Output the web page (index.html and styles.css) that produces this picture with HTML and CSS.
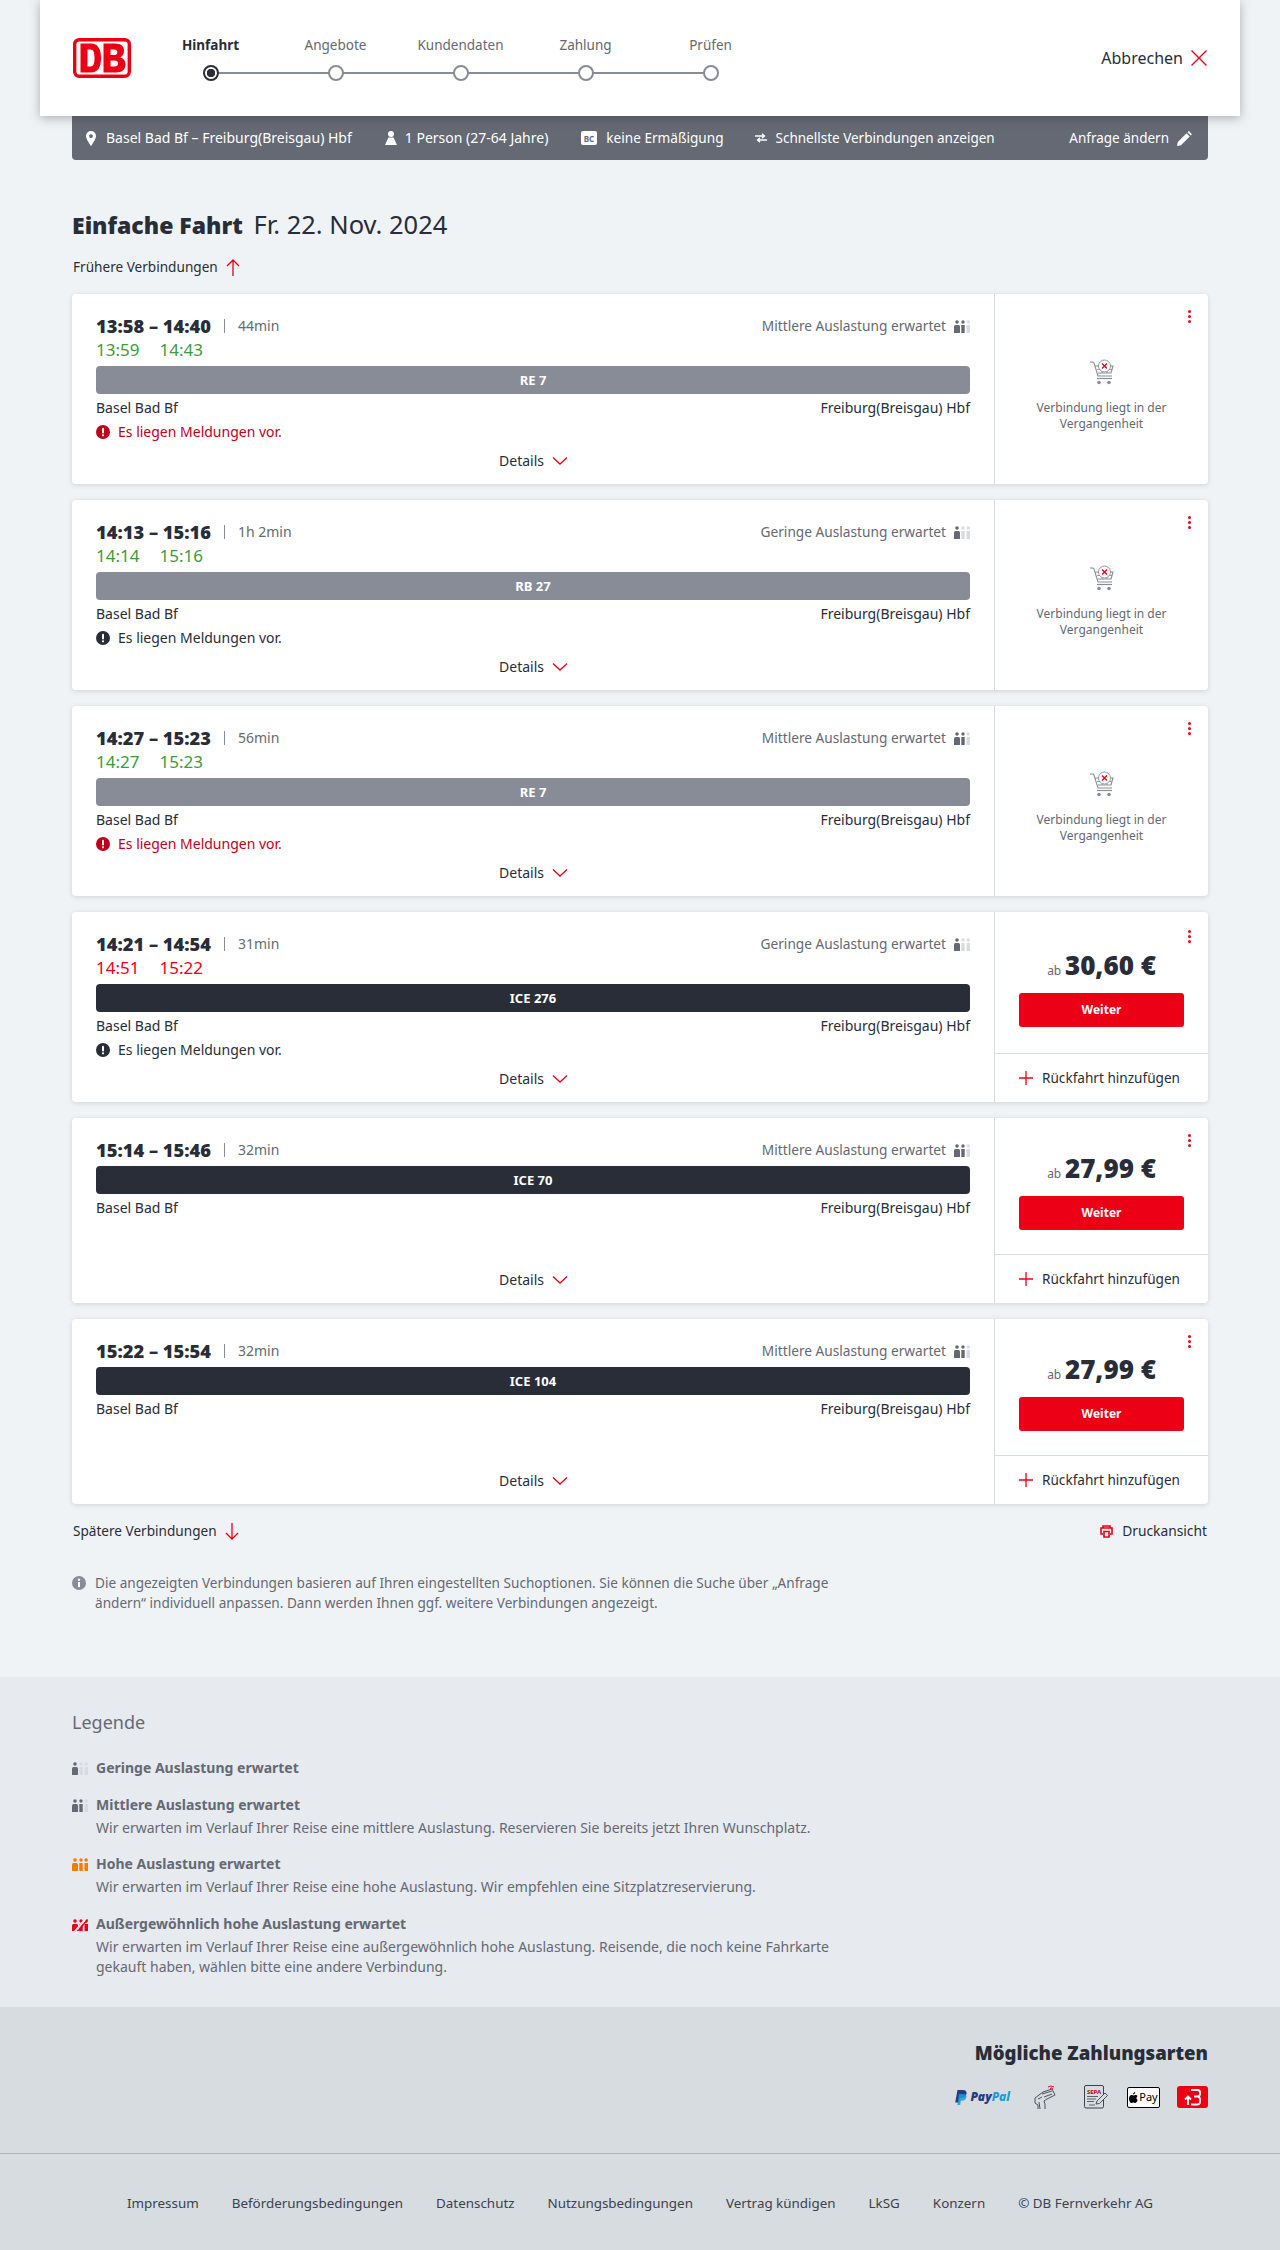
FILE: index.html
```html
<!DOCTYPE html>
<html lang="de">
<head>
  <meta charset="UTF-8" />
  <meta name="viewport" content="width=1280, initial-scale=1.0" />
  <title>Fahrplan - Basel Bad Bf nach Freiburg(Breisgau) Hbf</title>
  <link rel="stylesheet" href="styles.css">
</head>
<body>
  <!-- Icons, used below through <use> -->
  <svg class="sprite" aria-hidden="true">
    <symbol id="occ-1" viewBox="0 0 16 13">
      <circle cx="3" cy="2" r="1.8" fill="#646973"/><path d="M0 6.5Q0 5 1.5 5h3Q6 5 6 6.5V13H0z" fill="#646973"/>
      <circle cx="9" cy="2" r="1.7" fill="#d7dce1"/><rect x="7.3" y="5" width="3.4" height="8" fill="#d7dce1"/>
      <circle cx="14.2" cy="2" r="1.7" fill="#d7dce1"/><rect x="12.5" y="5" width="3.5" height="8" fill="#d7dce1"/>
    </symbol>
    <symbol id="occ-2" viewBox="0 0 16 13">
      <circle cx="3" cy="2" r="1.8" fill="#646973"/><path d="M0 6.5Q0 5 1.5 5h3Q6 5 6 6.5V13H0z" fill="#646973"/>
      <circle cx="9" cy="2" r="1.7" fill="#646973"/><rect x="7.3" y="5" width="3.4" height="8" fill="#646973"/>
      <circle cx="14.2" cy="2" r="1.7" fill="#d7dce1"/><rect x="12.5" y="5" width="3.5" height="8" fill="#d7dce1"/>
    </symbol>
    <symbol id="occ-3" viewBox="0 0 16 13">
      <circle cx="3" cy="2" r="1.8" fill="#f57c00"/><path d="M0 6.5Q0 5 1.5 5h3Q6 5 6 6.5V13H0z" fill="#f57c00"/>
      <circle cx="9" cy="2" r="1.7" fill="#f57c00"/><rect x="7.3" y="5" width="3.4" height="8" fill="#f57c00"/>
      <circle cx="14.2" cy="2" r="1.7" fill="#f57c00"/><rect x="12.5" y="5" width="3.5" height="8" fill="#f57c00"/>
    </symbol>
    <symbol id="occ-4" viewBox="0 0 16 13">
      <circle cx="3" cy="3" r="1.8" fill="#ec0016"/><path d="M0 7.5Q0 6 1.5 6h3Q6 6 6 7.5V13H0z" fill="#ec0016"/>
      <circle cx="9" cy="3" r="1.7" fill="#ec0016"/><rect x="7.3" y="6" width="3.4" height="7" fill="#ec0016"/>
      <circle cx="14.2" cy="3" r="1.7" fill="#ec0016"/><rect x="12.5" y="6" width="3.5" height="7" fill="#ec0016"/>
      <path d="M3 13.5 14.5 0" stroke="#e7eaef" stroke-width="2"/><path d="M6 13 15.5 1.5" stroke="#ec0016" stroke-width="1.4"/>
    </symbol>
    <symbol id="chev" viewBox="0 0 16 10"><path d="M1 1.5 8 8l7-6.5" fill="none" stroke="#ec0016" stroke-width="1.3"/></symbol>
    <symbol id="alert" viewBox="0 0 14 14"><circle cx="7" cy="7" r="7" fill="currentColor"/><rect x="6" y="2.8" width="2" height="5.6" rx="1" fill="#fff"/><circle cx="7" cy="10.3" r="1.1" fill="#fff"/></symbol>
    <symbol id="plus" viewBox="0 0 14 14"><path d="M7 0v14M0 7h14" stroke="#ec0016" stroke-width="1.3" fill="none"/></symbol>
    <symbol id="cart" viewBox="0 0 26 26">
      <path d="M1 3h3l1 1 4 13h14M6.5 7H24l-2 7H9" fill="none" stroke="#878c96" stroke-width="1.1"/>
      <path d="M8 10.5h15M13 7v7M18 7v7" fill="none" stroke="#878c96" stroke-width=".8"/>
      <path d="M8 19.5h15" stroke="#878c96" stroke-width="1.2"/>
      <circle cx="10" cy="23.5" r="1.8" fill="#878c96"/><circle cx="20" cy="23.5" r="1.8" fill="#878c96"/>
      <circle cx="15.5" cy="7" r="6" fill="#fff" stroke="#878c96" stroke-width=".9"/>
      <path d="M13 4.5l5 5M18 4.5l-5 5" stroke="#ec0016" stroke-width="1.4"/>
    </symbol>
  </svg>

  <header class="topbar">
    <svg class="logo" viewBox="0 0 58 40" aria-label="DB">
      <rect x="1.7" y="1.7" width="54.6" height="36.6" rx="4.5" fill="#fff" stroke="#ec0016" stroke-width="3.4"/>
      <path d="M7.5 5.5H18C25 5.5 28 11 28 20s-3 14.5-10 14.5H7.5zM14.5 11.5v17h3c3 0 4-3 4-8.500s-1-8.500-4-8.500zM30.5 5.5H42c6 0 9 2.700 9 7.500 0 3-1.400 5.300-4 6.300 3.500.9 5.500 3.300 5.500 7 0 5.200-3.300 8.200-9.500 8.200H30.500zM37.500 11.500V17H41c2.200 0 3.300-.9 3.300-2.800s-1.100-2.700-3.300-2.700zM37.500 22.500v6h4c2.300 0 3.500-1 3.500-3s-1.200-3-3.500-3z" fill="#ec0016" fill-rule="evenodd"/>
    </svg>
    <ol class="steps">
      <li class="step step-active"><span class="step-label">Hinfahrt</span><span class="step-dot"></span></li>
      <li class="step"><span class="step-label">Angebote</span><span class="step-dot"></span></li>
      <li class="step"><span class="step-label">Kundendaten</span><span class="step-dot"></span></li>
      <li class="step"><span class="step-label">Zahlung</span><span class="step-dot"></span></li>
      <li class="step"><span class="step-label">Prüfen</span><span class="step-dot"></span></li>
    </ol>
    <a class="cancel">Abbrechen
      <svg width="16" height="16" viewBox="0 0 16 16"><path d="M.5.5l15 15M15.5.5l-15 15" stroke="#ec0016" stroke-width="1.4" fill="none"/></svg>
    </a>
  </header>

  <main class="content">
    <div class="query">
      <span class="query-item query-route">
        <svg width="10" height="15" viewBox="0 0 10 15"><path fill-rule="evenodd" fill="#fff" d="M5 0a5 5 0 0 1 5 5c0 3.500-5 10-5 10S0 8.500 0 5a5 5 0 0 1 5-5zm0 3.200a1.900 1.900 0 1 0 0 3.800 1.900 1.900 0 0 0 0-3.800z"/></svg>
        Basel Bad Bf – Freiburg(Breisgau) Hbf
      </span>
      <span class="query-item query-person">
        <svg width="12" height="14" viewBox="0 0 12 14"><circle cx="6" cy="3" r="3" fill="#fff"/><path d="M3.500 6.500h5L12 14H0z" fill="#fff"/></svg>
        1 Person (27-64 Jahre)
      </span>
      <span class="query-item query-bc">
        <svg width="16" height="14" viewBox="0 0 16 14"><rect width="16" height="14" rx="2" fill="#fff"/><text x="8" y="10.5" text-anchor="middle" class="bc-text">BC</text></svg>
        keine Ermäßigung
      </span>
      <span class="query-item query-fast">
        <svg width="12" height="10" viewBox="0 0 12 10"><path d="M0 3h9M7 .8 9.500 3 7 5.200M12 7H3M5 4.800 2.500 7 5 9.200" stroke="#fff" stroke-width="1.3" fill="none"/></svg>
        Schnellste Verbindungen anzeigen
      </span>
      <a class="query-item query-edit">Anfrage ändern
        <svg width="15" height="15" viewBox="0 0 15 15"><path d="M0 15l.8-4L9.500 2.300l3.200 3.200L4 14.200zM10.500 1.300 11.800 0 15 3.200l-1.300 1.300z" fill="#fff"/></svg>
      </a>
    </div>

    <h1 class="page-title"><strong>Einfache Fahrt</strong> <span>Fr. 22. Nov. 2024</span></h1>

    <a class="more-link more-earlier">Frühere Verbindungen
      <svg width="14" height="17" viewBox="0 0 14 17"><path d="M7 17V1M1 7l6-6 6 6" stroke="#ec0016" stroke-width="1.3" fill="none"/></svg>
    </a>

    <article class="card">
      <div class="trip">
        <div class="trip-head">
          <span class="times">13:58 – 14:40</span><span class="sep"></span><span class="duration">44min</span>
          <span class="load">Mittlere Auslastung erwartet <svg class="occ"><use href="#occ-2"/></svg></span>
        </div>
        <div class="realtime on-time"><span>13:59</span><span>14:43</span></div>
        <div class="train train-regio">RE 7</div>
        <div class="stations"><span>Basel Bad Bf</span><span>Freiburg(Breisgau) Hbf</span></div>
        <div class="notice notice-alert"><svg class="notice-icon"><use href="#alert"/></svg>Es liegen Meldungen vor.</div>
        <a class="details">Details <svg class="chev"><use href="#chev"/></svg></a>
      </div>
      <div class="side">
        <span class="kebab"><i></i><i></i><i></i></span>
        <div class="past"><svg class="cart"><use href="#cart"/></svg><p>Verbindung liegt in der Vergangenheit</p></div>
      </div>
    </article>

    <article class="card">
      <div class="trip">
        <div class="trip-head">
          <span class="times">14:13 – 15:16</span><span class="sep"></span><span class="duration">1h 2min</span>
          <span class="load">Geringe Auslastung erwartet <svg class="occ"><use href="#occ-1"/></svg></span>
        </div>
        <div class="realtime on-time"><span>14:14</span><span>15:16</span></div>
        <div class="train train-regio">RB 27</div>
        <div class="stations"><span>Basel Bad Bf</span><span>Freiburg(Breisgau) Hbf</span></div>
        <div class="notice"><svg class="notice-icon"><use href="#alert"/></svg>Es liegen Meldungen vor.</div>
        <a class="details">Details <svg class="chev"><use href="#chev"/></svg></a>
      </div>
      <div class="side">
        <span class="kebab"><i></i><i></i><i></i></span>
        <div class="past"><svg class="cart"><use href="#cart"/></svg><p>Verbindung liegt in der Vergangenheit</p></div>
      </div>
    </article>

    <article class="card">
      <div class="trip">
        <div class="trip-head">
          <span class="times">14:27 – 15:23</span><span class="sep"></span><span class="duration">56min</span>
          <span class="load">Mittlere Auslastung erwartet <svg class="occ"><use href="#occ-2"/></svg></span>
        </div>
        <div class="realtime on-time"><span>14:27</span><span>15:23</span></div>
        <div class="train train-regio">RE 7</div>
        <div class="stations"><span>Basel Bad Bf</span><span>Freiburg(Breisgau) Hbf</span></div>
        <div class="notice notice-alert"><svg class="notice-icon"><use href="#alert"/></svg>Es liegen Meldungen vor.</div>
        <a class="details">Details <svg class="chev"><use href="#chev"/></svg></a>
      </div>
      <div class="side">
        <span class="kebab"><i></i><i></i><i></i></span>
        <div class="past"><svg class="cart"><use href="#cart"/></svg><p>Verbindung liegt in der Vergangenheit</p></div>
      </div>
    </article>

    <article class="card">
      <div class="trip">
        <div class="trip-head">
          <span class="times">14:21 – 14:54</span><span class="sep"></span><span class="duration">31min</span>
          <span class="load">Geringe Auslastung erwartet <svg class="occ"><use href="#occ-1"/></svg></span>
        </div>
        <div class="realtime delayed"><span>14:51</span><span>15:22</span></div>
        <div class="train">ICE 276</div>
        <div class="stations"><span>Basel Bad Bf</span><span>Freiburg(Breisgau) Hbf</span></div>
        <div class="notice"><svg class="notice-icon"><use href="#alert"/></svg>Es liegen Meldungen vor.</div>
        <a class="details">Details <svg class="chev"><use href="#chev"/></svg></a>
      </div>
      <div class="side">
        <span class="kebab kebab-low"><i></i><i></i><i></i></span>
        <div class="offer">
          <div class="price"><small>ab</small> <b>30,60 €</b></div>
          <a class="btn-next">Weiter</a>
        </div>
        <a class="return"><svg class="plus"><use href="#plus"/></svg>Rückfahrt hinzufügen</a>
      </div>
    </article>

    <article class="card card-short">
      <div class="trip">
        <div class="trip-head">
          <span class="times">15:14 – 15:46</span><span class="sep"></span><span class="duration">32min</span>
          <span class="load">Mittlere Auslastung erwartet <svg class="occ"><use href="#occ-2"/></svg></span>
        </div>
        <div class="train">ICE 70</div>
        <div class="stations"><span>Basel Bad Bf</span><span>Freiburg(Breisgau) Hbf</span></div>
        <a class="details">Details <svg class="chev"><use href="#chev"/></svg></a>
      </div>
      <div class="side">
        <span class="kebab"><i></i><i></i><i></i></span>
        <div class="offer">
          <div class="price"><small>ab</small> <b>27,99 €</b></div>
          <a class="btn-next">Weiter</a>
        </div>
        <a class="return"><svg class="plus"><use href="#plus"/></svg>Rückfahrt hinzufügen</a>
      </div>
    </article>

    <article class="card card-short">
      <div class="trip">
        <div class="trip-head">
          <span class="times">15:22 – 15:54</span><span class="sep"></span><span class="duration">32min</span>
          <span class="load">Mittlere Auslastung erwartet <svg class="occ"><use href="#occ-2"/></svg></span>
        </div>
        <div class="train">ICE 104</div>
        <div class="stations"><span>Basel Bad Bf</span><span>Freiburg(Breisgau) Hbf</span></div>
        <a class="details">Details <svg class="chev"><use href="#chev"/></svg></a>
      </div>
      <div class="side">
        <span class="kebab"><i></i><i></i><i></i></span>
        <div class="offer">
          <div class="price"><small>ab</small> <b>27,99 €</b></div>
          <a class="btn-next">Weiter</a>
        </div>
        <a class="return"><svg class="plus"><use href="#plus"/></svg>Rückfahrt hinzufügen</a>
      </div>
    </article>

    <div class="more-row">
      <a class="more-link">Spätere Verbindungen
        <svg width="14" height="17" viewBox="0 0 14 17"><path d="M7 0v16M1 10l6 6 6-6" stroke="#ec0016" stroke-width="1.3" fill="none"/></svg>
      </a>
      <a class="print">
        <svg width="13" height="13" viewBox="0 0 13 13"><path d="M3 3V1h7v2M3 9H1V3h11v6h-2M4 6.500h5V12H4z" fill="none" stroke="#ec0016" stroke-width="1.6"/></svg>
        Druckansicht
      </a>
    </div>

    <div class="hint">
      <svg width="14" height="14" viewBox="0 0 14 14"><circle cx="7" cy="7" r="7" fill="#878c96"/><rect x="6" y="6" width="2" height="5.2" fill="#fff"/><circle cx="7" cy="3.8" r="1.2" fill="#fff"/></svg>
      <p>Die angezeigten Verbindungen basieren auf Ihren eingestellten Suchoptionen. Sie können die Suche über „Anfrage ändern“ individuell anpassen. Dann werden Ihnen ggf. weitere Verbindungen angezeigt.</p>
    </div>
  </main>

  <section class="legend">
    <div class="wrap">
      <h2>Legende</h2>
      <div class="legend-item">
        <svg class="occ"><use href="#occ-1"/></svg>
        <div><h3>Geringe Auslastung erwartet</h3></div>
      </div>
      <div class="legend-item">
        <svg class="occ"><use href="#occ-2"/></svg>
        <div><h3>Mittlere Auslastung erwartet</h3>
          <p>Wir erwarten im Verlauf Ihrer Reise eine mittlere Auslastung. Reservieren Sie bereits jetzt Ihren Wunschplatz.</p></div>
      </div>
      <div class="legend-item">
        <svg class="occ"><use href="#occ-3"/></svg>
        <div><h3>Hohe Auslastung erwartet</h3>
          <p>Wir erwarten im Verlauf Ihrer Reise eine hohe Auslastung. Wir empfehlen eine Sitzplatzreservierung.</p></div>
      </div>
      <div class="legend-item">
        <svg class="occ"><use href="#occ-4"/></svg>
        <div><h3>Außergewöhnlich hohe Auslastung erwartet</h3>
          <p>Wir erwarten im Verlauf Ihrer Reise eine außergewöhnlich hohe Auslastung. Reisende, die noch keine Fahrkarte gekauft haben, wählen bitte eine andere Verbindung.</p></div>
      </div>
    </div>
  </section>

  <footer class="footer">
    <div class="wrap payments">
      <h2>Mögliche Zahlungsarten</h2>
      <div class="pay-icons">
        <span class="pay-paypal">
          <svg width="12" height="15" viewBox="0 0 12 15"><path d="M2.500 0H8c2.500 0 4 1.300 3.500 3.800-.5 2.700-2.300 4-5 4H4.800L4 12.500H.2z" fill="#253b80"/><path d="M4 4h4.500c2 0 3.300 1 2.900 3-.5 2.600-2 3.800-4.400 3.800H5.800L5.200 15H2.400z" fill="#179bd7" opacity=".85"/></svg>
          <span><b>Pay</b><i>Pal</i></span>
        </span>
        <svg class="pay-card" width="22" height="24" viewBox="0 0 22 24" fill="none" stroke="#3c414b" stroke-width=".9">
          <path d="M1 13 9 7l9-3 3 6-8 4-3 2"/><path d="M8 9l10-3M10 12l8-3"/>
          <path d="M1 13v5l3 2v4M4 14l4-2M5 17l1 7M10 16l1 3v5"/>
          <path d="M14 2Q17 0 20 2M16 3.500Q17.500 2.500 19 3.500" stroke="#ec0016"/>
        </svg>
        <svg class="pay-sepa" width="25" height="24" viewBox="0 0 25 24" fill="none">
          <rect x=".5" y=".5" width="19" height="22.5" rx="1.5" stroke="#3c414b"/>
          <text x="10" y="8.5" text-anchor="middle" class="sepa-text">SEPA</text>
          <path d="M3 11.500h11M3 14h9M3 16.500h7M5 20h6" stroke="#3c414b" stroke-width=".8"/>
          <path d="M12 19l1-3 8-8 2.500 2.500-8 8z" fill="#d7dce1" stroke="#3c414b" stroke-width=".9"/>
        </svg>
        <span class="pay-apple"><svg width="9" height="11" viewBox="0 0 9 11"><path d="M6.200 0C6.300 1.200 5.300 2.400 4.100 2.400 4 1.200 5.100.1 6.200 0zM8.700 8c-.5 1.300-1.400 3-2.600 3-.8 0-1-.5-1.900-.5s-1.200.5-1.900.5C1 11 0 8.700 0 6.600 0 4.500 1.300 3 2.800 3c.8 0 1.400.5 1.900.5S5.700 3 6.700 3c.7 0 1.500.4 2 1.100-1.700 1-1.500 3.200 0 3.900z" fill="#000"/></svg>Pay</span>
        <span class="pay-red">
          <svg width="18" height="17" viewBox="0 0 18 17" fill="none" stroke="#fff" stroke-width="1.8"><path d="M7 1h6.500c3.500 0 3.500 6.500 0 6.500H10h3.500c3.500 0 3.500 8 0 8H7"/><path d="M1 10.500 4 7.500l3 3M4 7.500V16"/></svg>
        </span>
      </div>
    </div>
    <nav class="footer-links">
      <a>Impressum</a>
      <a>Beförderungsbedingungen</a>
      <a>Datenschutz</a>
      <a>Nutzungsbedingungen</a>
      <a>Vertrag kündigen</a>
      <a>LkSG</a>
      <a>Konzern</a>
      <a>© DB Fernverkehr AG</a>
    </nav>
  </footer>
</body>
</html>
```

FILE: styles.css
```css
html, body {
  margin: 0;
  padding: 0;
}

body {
  font-family: 'Noto Sans', 'Open Sans', sans-serif;
  font-size: 14px;
  line-height: 20px;
  color: #282d37;
  background: #f0f3f5;
}

h1, h2, h3, p, ol {
  margin: 0;
  padding: 0;
}

.sprite {
  display: none;
}

.wrap, .content {
  width: 1136px;
  margin: 0 auto;
}

/* top bar with stepper */
.topbar {
  position: relative;
  z-index: 2;
  box-sizing: border-box;
  width: 1200px;
  height: 116px;
  margin: 0 auto;
  padding: 0 33px;
  display: flex;
  align-items: center;
  background: #fff;
  box-shadow: 0 2px 10px rgba(40, 45, 55, 0.35);
}

.logo {
  width: 58px;
  height: 40px;
  flex: none;
}

.steps {
  display: flex;
  list-style: none;
  margin-left: 17px;
}

.step {
  position: relative;
  width: 125px;
  display: flex;
  flex-direction: column;
  align-items: center;
  gap: 10px;
  color: #646973;
}

.step-label {
  line-height: 20px;
  height: 20px;
  font-size: 13.5px;
}

.step-active {
  color: #282d37;
  font-weight: 700;
}

.step-dot {
  position: relative;
  z-index: 1;
  box-sizing: border-box;
  width: 16px;
  height: 16px;
  border: 2px solid #878c96;
  border-radius: 50%;
  background: #fff;
}

.step-active .step-dot {
  border-color: #282d37;
  background: radial-gradient(circle, #282d37 0 4px, #fff 4.5px);
}

.step + .step::before {
  content: "";
  position: absolute;
  left: -62px;
  width: 125px;
  top: 37px;
  height: 2px;
  background: #878c96;
}

.cancel {
  margin-left: auto;
  display: flex;
  align-items: center;
  gap: 8px;
  font-size: 16px;
}

/* search summary */
.query {
  height: 44px;
  padding: 0 16px 0 14px;
  box-sizing: border-box;
  display: flex;
  align-items: center;
  background: #646973;
  color: #fff;
  border-radius: 0 0 4px 4px;
}

.query-item {
  display: flex;
  align-items: center;
  gap: 10px;
  white-space: nowrap;
}

.query-person { margin-left: 33px; gap: 8px; }
.query-bc { margin-left: 33px; font-size: 13.6px; gap: 9px; }
.query-fast { margin-left: 31px; font-size: 13.5px; gap: 9px; }
.query-edit { margin-left: auto; gap: 8px; font-size: 13.5px; }

.bc-text {
  font-size: 8px;
  font-weight: 700;
  fill: #646973;
}

.page-title {
  height: 30px;
  margin-top: 49px;
  margin-bottom: 16px;
  font-size: 25.5px;
  line-height: 30px;
  font-weight: 400;
}

.page-title strong {
  font-size: 23px;
  font-weight: 900;
  margin-right: 4px;
}

.more-link {
  display: inline-flex;
  align-items: center;
  gap: 8px;
  height: 24px;
  padding-left: 1px;
  font-size: 13.6px;
}

.more-earlier {
  display: flex;
  margin: 16px 0 15px;
}

/* connection cards */
.card {
  position: relative;
  display: grid;
  grid-template-columns: 1fr 214px;
  min-height: 190px;
  margin-bottom: 16px;
  background: #fff;
  border-radius: 4px;
  box-shadow: 0 1px 5px rgba(40, 45, 55, 0.16);
}

.card-short {
  min-height: 185px;
}

.trip {
  display: flex;
  flex-direction: column;
  padding: 20px 24px 11px;
}

.trip-head {
  display: flex;
  align-items: center;
  height: 24px;
}

.times {
  font-size: 18.3px;
  font-weight: 900;
}

.sep {
  width: 1px;
  height: 14px;
  margin: 0 13px;
  background: #878c96;
}

.duration, .load {
  color: #646973;
}

.load {
  margin-left: auto;
  display: flex;
  align-items: center;
  gap: 8px;
  font-size: 13.7px;
}

.occ {
  width: 16px;
  height: 13px;
  flex: none;
}

.realtime {
  display: flex;
  gap: 20px;
  height: 24px;
  line-height: 24px;
  font-size: 17px;
}

.on-time { color: #3c9b3c; }
.delayed { color: #ec0016; }

.train {
  height: 28px;
  margin-top: 4px;
  border-radius: 4px;
  background: #282d37;
  color: #fff;
  font-size: 13px;
  font-weight: 700;
  line-height: 28px;
  text-align: center;
}

.train-regio {
  background: #878c96;
}

.stations {
  display: flex;
  justify-content: space-between;
  height: 24px;
  line-height: 24px;
  margin-top: 2px;
}

.notice {
  display: flex;
  align-items: center;
  gap: 8px;
  height: 24px;
}

.notice-alert {
  color: #c0001a;
}

.notice-icon {
  width: 14px;
  height: 14px;
  flex: none;
}

.details {
  margin-top: auto;
  height: 24px;
  display: flex;
  justify-content: center;
  align-items: center;
  gap: 8px;
  padding-left: 1px;
}

.chev {
  width: 16px;
  height: 10px;
}

.side {
  position: relative;
  display: flex;
  flex-direction: column;
  border-left: 1px solid #d7dce1;
}

.kebab {
  position: absolute;
  top: 16px;
  right: 17px;
  display: flex;
  flex-direction: column;
  gap: 2px;
}

.kebab-low {
  top: 18px;
}

.kebab i {
  width: 3px;
  height: 3px;
  border-radius: 50%;
  background: #ec0016;
}

.past {
  flex: 1;
  display: flex;
  flex-direction: column;
  align-items: center;
  padding-top: 65px;
  color: #646973;
}

.cart {
  width: 26px;
  height: 26px;
}

.past p {
  width: 150px;
  margin-top: 15px;
  font-size: 12px;
  line-height: 16px;
  text-align: center;
}

.offer {
  flex: 1;
  display: flex;
  flex-direction: column;
  align-items: center;
  justify-content: center;
  padding-top: 12px;
  gap: 14px;
}

.price {
  height: 28px;
  line-height: 28px;
}

.price small {
  font-size: 12px;
  color: #646973;
}

.price b {
  font-size: 26px;
  font-weight: 900;
}

.btn-next {
  width: 165px;
  height: 34px;
  line-height: 34px;
  border-radius: 3px;
  background: #ec0016;
  color: #fff;
  font-size: 12px;
  font-weight: 700;
  text-align: center;
}

.return {
  height: 48px;
  border-top: 1px solid #d7dce1;
  padding-left: 24px;
  display: flex;
  align-items: center;
  gap: 9px;
  font-size: 13.6px;
}

.plus {
  width: 14px;
  height: 14px;
}

.more-row {
  display: flex;
  justify-content: space-between;
  align-items: center;
  height: 24px;
  margin-top: -1px;
}

.print {
  display: flex;
  align-items: center;
  gap: 9px;
  padding-right: 1px;
  font-size: 13.8px;
}

.hint {
  display: flex;
  gap: 9px;
  margin-top: 30px;
  color: #646973;
  font-size: 13.6px;
}

.hint svg {
  flex: none;
  margin-top: 3px;
}

.hint p {
  width: 745px;
}

/* legend */
.legend {
  margin-top: 64px;
  padding: 31px 0 30.5px;
  background: #e7eaef;
  color: #646973;
}

.legend h2 {
  font-size: 18px;
  line-height: 28px;
  font-weight: 400;
  margin-bottom: 22px;
}

.legend-item {
  display: flex;
  gap: 8px;
  margin-bottom: 16.5px;
}

.legend-item:last-child {
  margin-bottom: 0;
}

.legend-item .occ {
  margin-top: 4px;
}

.legend-item h3 {
  font-size: 14px;
  font-weight: 700;
}

.legend-item p {
  margin-top: 3px;
  width: 760px;
}

/* footer */
.footer {
  background: #d7dce1;
}

.payments {
  height: 146px;
  padding-top: 32px;
  box-sizing: border-box;
}

.payments h2 {
  font-size: 18.6px;
  line-height: 28px;
  font-weight: 900;
  text-align: right;
}

.pay-icons {
  margin-top: 18px;
  display: flex;
  justify-content: flex-end;
  align-items: center;
  height: 24px;
}

.pay-paypal {
  display: flex;
  align-items: center;
  gap: 3px;
  font-size: 12px;
  font-style: italic;
  font-weight: 800;
  color: #253b80;
}

.pay-paypal i {
  color: #179bd7;
}

.pay-card { margin-left: 24px; }
.pay-sepa { margin-left: 28px; }

.sepa-text {
  font-size: 6px;
  font-weight: 700;
  fill: #c0001a;
}

.pay-apple {
  box-sizing: border-box;
  margin-left: 18px;
  width: 33px;
  height: 21px;
  display: flex;
  align-items: center;
  justify-content: center;
  gap: 1px;
  background: #fff;
  border: 1px solid #000;
  border-radius: 2px;
  font-size: 11px;
  color: #000;
}

.pay-red {
  margin-left: 17px;
  width: 31px;
  height: 22px;
  display: flex;
  align-items: center;
  justify-content: center;
  background: #ec0016;
  border-radius: 3px;
}

.footer-links {
  height: 97px;
  box-sizing: border-box;
  border-top: 1px solid #afb4bb;
  padding-top: 39px;
  display: flex;
  justify-content: center;
  gap: 33px;
  font-size: 13.4px;
  color: #3c414b;
}
```
